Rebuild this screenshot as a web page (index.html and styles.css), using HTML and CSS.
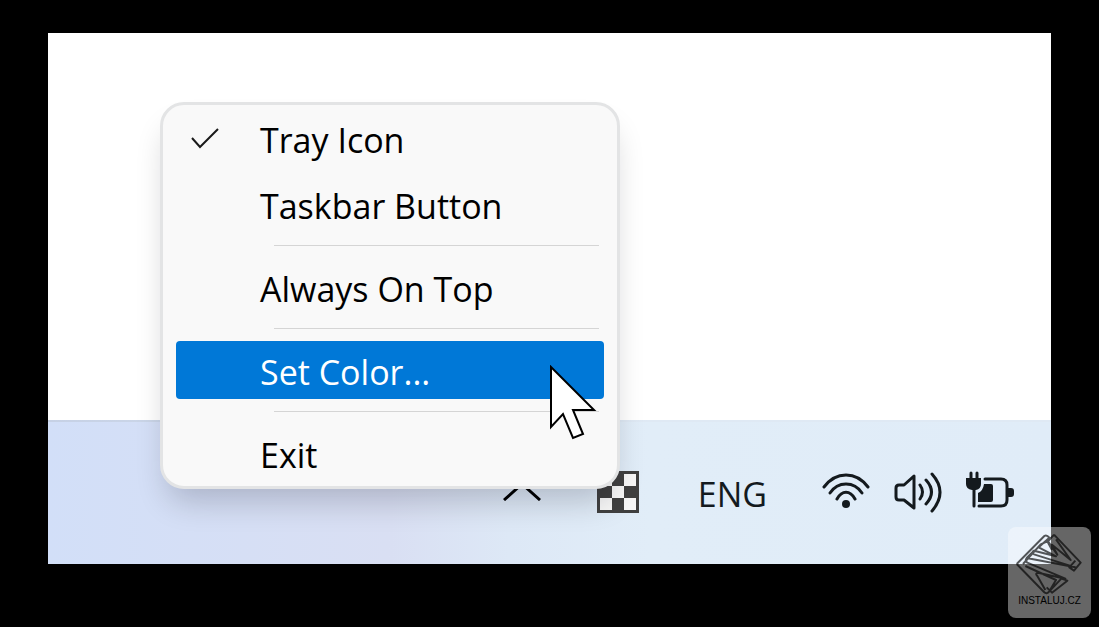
FILE: index.html
```html
<!DOCTYPE html>
<html lang="en">
<head>
<meta charset="utf-8">
<title>Tray menu</title>
<link rel="stylesheet" href="styles.css">
</head>
<body>
<main class="screen">
  <div class="desktop"></div>
  <footer class="taskbar">
    <button class="tray-button" aria-label="Show hidden icons">
      <svg width="38" height="18" viewBox="0 0 38 18"><path d="M1 17 19 1 37 17" fill="none" stroke="#000" stroke-width="3"/></svg>
    </button>
    <button class="tray-button app-icon" aria-label="Color tool">
      <svg width="42" height="42" viewBox="0 0 42 42"><path fill="#404040" d="M0 0h42v42H0z"/><path fill="#f7f7f7" d="M3 3h12v12H3zM27 3h12v12H27zM15 15h12v12H15zM3 27h12v12H3zM27 27h12v12H27z"/></svg>
    </button>
    <button class="tray-button language">ENG</button>
    <div class="status">
      <button class="tray-button" aria-label="Wi-Fi">
        <svg width="48" height="42" viewBox="0 0 48 42" fill="none" stroke="#141a1e" stroke-width="3" stroke-linecap="round"><path d="M2 16C14 0 34 0 46 16M8 22C16 10 32 10 40 22M15 28C20 19 28 19 33 28"/><circle cx="24" cy="33" r="4" fill="#141a1e" stroke="none"/></svg>
      </button>
      <button class="tray-button" aria-label="Volume">
        <svg width="48" height="42" viewBox="0 0 48 42" fill="none" stroke="#141a1e" stroke-width="3" stroke-linecap="round" stroke-linejoin="round"><path d="M20 5v32L10 29H5q-3 0-3-3V17q0-3 3-3h5ZM26 14q5 7 0 14M32 9q11 12 0 24M38 3q16 18 0 37"/></svg>
      </button>
      <button class="tray-button" aria-label="Battery, charging">
        <svg width="48" height="42" viewBox="0 0 48 42" fill="none" stroke="#141a1e" stroke-width="3" stroke-linecap="round"><path d="M19 8h16q6 0 6 6v15q0 6-6 6H13M5 2v5M11 2v5M8 17v18"/><path fill="#141a1e" stroke="none" d="M0 7h15v6q0 5-5 6H6q-6-1-6-6ZM18 13h7q2 0 2 2v14q0 2-2 2H12v-9q5-2 6-9ZM42 17h3q3 0 3 3v3q0 3-3 3h-3Z"/></svg>
      </button>
    </div>
  </footer>
  <div class="menu" role="menu">
    <button class="menu-item" role="menuitemcheckbox" aria-checked="true">
      <svg class="check" width="30" height="24" viewBox="0 0 30 24"><path d="M2 12 10 21 28 3" fill="none" stroke="#1a1a1a" stroke-width="2"/></svg>
      Tray Icon
    </button>
    <button class="menu-item" role="menuitem">Taskbar Button</button>
    <hr class="separator">
    <button class="menu-item" role="menuitem">Always On Top</button>
    <hr class="separator">
    <button class="menu-item selected" role="menuitem">Set Color...</button>
    <hr class="separator">
    <button class="menu-item" role="menuitem">Exit</button>
    <svg class="pointer" width="48" height="76" viewBox="0 0 48 76"><path d="M2 2V62L14 49 24 73 34 69 24 45H45Z" fill="#fff" stroke="#000" stroke-width="2"/></svg>
  </div>
</main>
<div class="badge">
  <svg width="67" height="62" viewBox="12 9 201 186" fill="none" stroke="#000" stroke-opacity=".65" stroke-width="6" stroke-linejoin="round"><path d="M14 102 97 18Q104 13 112 23L80 52 132 79 66 62Q58 66 66 73L190 112 44 84Q38 92 46 98L160 146 78 128Q68 130 76 138L100 180M14 102 96 186Q104 194 112 184L148 146 166 152 120 188 104 172M33 102 86 43 106 34 120 60M126 14 206 98 186 122 172 112 190 92M126 14 108 34 136 74 120 44 176 90 132 28M40 108 132 150 112 184M66 62 44 84"/></svg>
  <span class="badge-text">INSTALUJ.CZ</span>
</div>
</body>
</html>
```
FILE: styles.css
```css
* { box-sizing: border-box; }
body {
  margin: 0;
  min-height: 100vh;
  display: flex;
  padding: 33px 48px 63px;
  position: relative;
  background: #000;
  font-family: "Open Sans", "Noto Sans", sans-serif;
}
button { border: 0; background: none; font: inherit; color: inherit; padding: 0; }
svg { display: block; }
.screen {
  flex: 1;
  display: flex;
  flex-direction: column;
  position: relative;
  overflow: hidden;
  background: #fff;
}
.desktop { flex: 1; }
.taskbar {
  height: 144px;
  display: flex;
  align-items: center;
  justify-content: flex-end;
  padding-right: 37px;
  background:
    linear-gradient(90deg, #c6d1e5, #dfe9f4 60%) top / 100% 2px no-repeat,
    linear-gradient(90deg, #d2dff8 0%, #d9dff3 34%, #dde8f6 46%, #e1edf8 60%, #e0ecf8 100%);
}
.app-icon { margin: 0 59px 0 56px; }
.language { padding-top: 4px; font-size: 34px; line-height: 48px; color: #141a1e; }
.status { display: flex; gap: 24px; margin-left: 55px; }
.menu {
  position: absolute;
  right: 431px;
  bottom: 75px;
  width: 460px;
  display: flex;
  flex-direction: column;
  gap: 8px;
  padding: 4px 13px;
  border: 3px solid #e3e4e5;
  border-radius: 24px;
  background: #f9f9f9;
  box-shadow: 0 20px 32px -8px rgba(0, 0, 20, .2);
}
.menu-item {
  position: relative;
  height: 58px;
  padding: 5px 0 0 84px;
  border-radius: 4px;
  font-size: 34px;
  line-height: 53px;
  text-align: left;
  color: #000;
}
.selected { background: #0078d7; color: #fff; }
.check { position: absolute; left: 14px; top: 17px; }
.separator {
  width: auto;
  height: 1px;
  margin: 4px 5px 4px 98px;
  border: 0;
  background: #d5d5d5;
}
.pointer { position: absolute; right: 20px; bottom: 45px; }
.badge {
  position: absolute;
  right: 8px;
  bottom: 9px;
  width: 83px;
  height: 91px;
  display: flex;
  flex-direction: column;
  align-items: center;
  padding-top: 6px;
  border-radius: 8px;
  background: rgba(255, 255, 255, .4);
}
.badge-text { font: 10px/12px "Liberation Sans", sans-serif; color: #000; }
```
